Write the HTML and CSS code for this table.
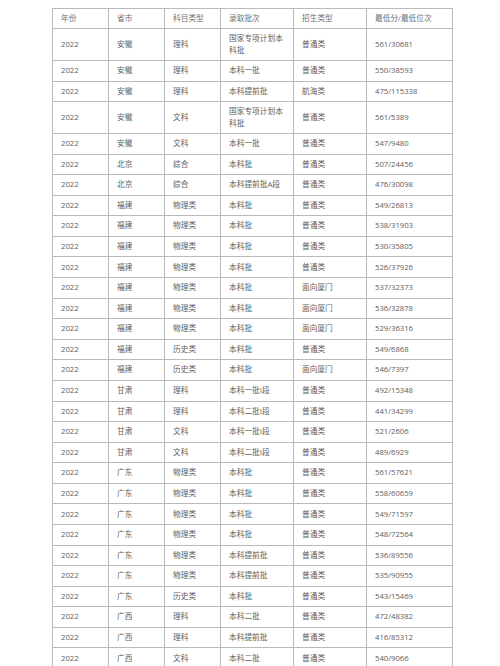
FILE: index.html
```html
<!DOCTYPE html>
<html lang="zh-CN">
<head>
<meta charset="utf-8">
<title>2022 录取分数</title>
<link rel="stylesheet" href="styles.css">
</head>
<body>
<div class="page">
<table class="scores">
<colgroup>
<col class="c-year"><col class="c-prov"><col class="c-subj"><col class="c-batch"><col class="c-type"><col class="c-score">
</colgroup>
<thead>
<tr><th>年份</th><th>省市</th><th>科目类型</th><th>录取批次</th><th>招生类型</th><th>最低分/最低位次</th></tr>
</thead>
<tbody>
<tr><td>2022</td><td>安徽</td><td>理科</td><td>国家专项计划本科批</td><td>普通类</td><td>561/30681</td></tr>
<tr><td>2022</td><td>安徽</td><td>理科</td><td>本科一批</td><td>普通类</td><td>550/38593</td></tr>
<tr><td>2022</td><td>安徽</td><td>理科</td><td>本科提前批</td><td>航海类</td><td>475/115338</td></tr>
<tr><td>2022</td><td>安徽</td><td>文科</td><td>国家专项计划本科批</td><td>普通类</td><td>561/5389</td></tr>
<tr><td>2022</td><td>安徽</td><td>文科</td><td>本科一批</td><td>普通类</td><td>547/9480</td></tr>
<tr><td>2022</td><td>北京</td><td>综合</td><td>本科批</td><td>普通类</td><td>507/24456</td></tr>
<tr><td>2022</td><td>北京</td><td>综合</td><td>本科提前批A段</td><td>普通类</td><td>476/30098</td></tr>
<tr><td>2022</td><td>福建</td><td>物理类</td><td>本科批</td><td>普通类</td><td>549/26813</td></tr>
<tr><td>2022</td><td>福建</td><td>物理类</td><td>本科批</td><td>普通类</td><td>538/31903</td></tr>
<tr><td>2022</td><td>福建</td><td>物理类</td><td>本科批</td><td>普通类</td><td>530/35805</td></tr>
<tr><td>2022</td><td>福建</td><td>物理类</td><td>本科批</td><td>普通类</td><td>526/37926</td></tr>
<tr><td>2022</td><td>福建</td><td>物理类</td><td>本科批</td><td>面向厦门</td><td>537/32373</td></tr>
<tr><td>2022</td><td>福建</td><td>物理类</td><td>本科批</td><td>面向厦门</td><td>536/32878</td></tr>
<tr><td>2022</td><td>福建</td><td>物理类</td><td>本科批</td><td>面向厦门</td><td>529/36316</td></tr>
<tr><td>2022</td><td>福建</td><td>历史类</td><td>本科批</td><td>普通类</td><td>549/6868</td></tr>
<tr><td>2022</td><td>福建</td><td>历史类</td><td>本科批</td><td>面向厦门</td><td>546/7397</td></tr>
<tr><td>2022</td><td>甘肃</td><td>理科</td><td>本科一批I段</td><td>普通类</td><td>492/15348</td></tr>
<tr><td>2022</td><td>甘肃</td><td>理科</td><td>本科二批I段</td><td>普通类</td><td>441/34299</td></tr>
<tr><td>2022</td><td>甘肃</td><td>文科</td><td>本科一批I段</td><td>普通类</td><td>521/2606</td></tr>
<tr><td>2022</td><td>甘肃</td><td>文科</td><td>本科二批I段</td><td>普通类</td><td>489/6929</td></tr>
<tr><td>2022</td><td>广东</td><td>物理类</td><td>本科批</td><td>普通类</td><td>561/57621</td></tr>
<tr><td>2022</td><td>广东</td><td>物理类</td><td>本科批</td><td>普通类</td><td>558/60659</td></tr>
<tr><td>2022</td><td>广东</td><td>物理类</td><td>本科批</td><td>普通类</td><td>549/71597</td></tr>
<tr><td>2022</td><td>广东</td><td>物理类</td><td>本科批</td><td>普通类</td><td>548/72564</td></tr>
<tr><td>2022</td><td>广东</td><td>物理类</td><td>本科提前批</td><td>普通类</td><td>536/89556</td></tr>
<tr><td>2022</td><td>广东</td><td>物理类</td><td>本科提前批</td><td>普通类</td><td>535/90955</td></tr>
<tr><td>2022</td><td>广东</td><td>历史类</td><td>本科批</td><td>普通类</td><td>543/15469</td></tr>
<tr><td>2022</td><td>广西</td><td>理科</td><td>本科二批</td><td>普通类</td><td>472/48382</td></tr>
<tr><td>2022</td><td>广西</td><td>理科</td><td>本科提前批</td><td>普通类</td><td>416/85312</td></tr>
<tr><td>2022</td><td>广西</td><td>文科</td><td>本科二批</td><td>普通类</td><td>540/9066</td></tr>
</tbody>
</table>
</div>
</body>
</html>
```
FILE: styles.css
```css
html, body {
  margin: 0;
  padding: 0;
  background: #ffffff;
}

.page {
  padding: 7.5px 0 0 52px;
  font-family: "Open Sans", "Noto Sans CJK SC", sans-serif;
}

.scores {
  border-collapse: collapse;
  table-layout: fixed;
  width: 400px;
  font-size: 7.7px;
  line-height: 11.3px;
  color: #606060;
}

.c-year, .c-prov, .c-subj { width: 56px; }
.c-batch, .c-type { width: 73px; }
.c-score { width: 86px; }

.scores th,
.scores td {
  border: 1px solid #bababa;
  padding: 4.15px 8px;
  text-align: left;
  vertical-align: middle;
  font-weight: normal;
}

.scores th {
  color: #707070;
}
```
